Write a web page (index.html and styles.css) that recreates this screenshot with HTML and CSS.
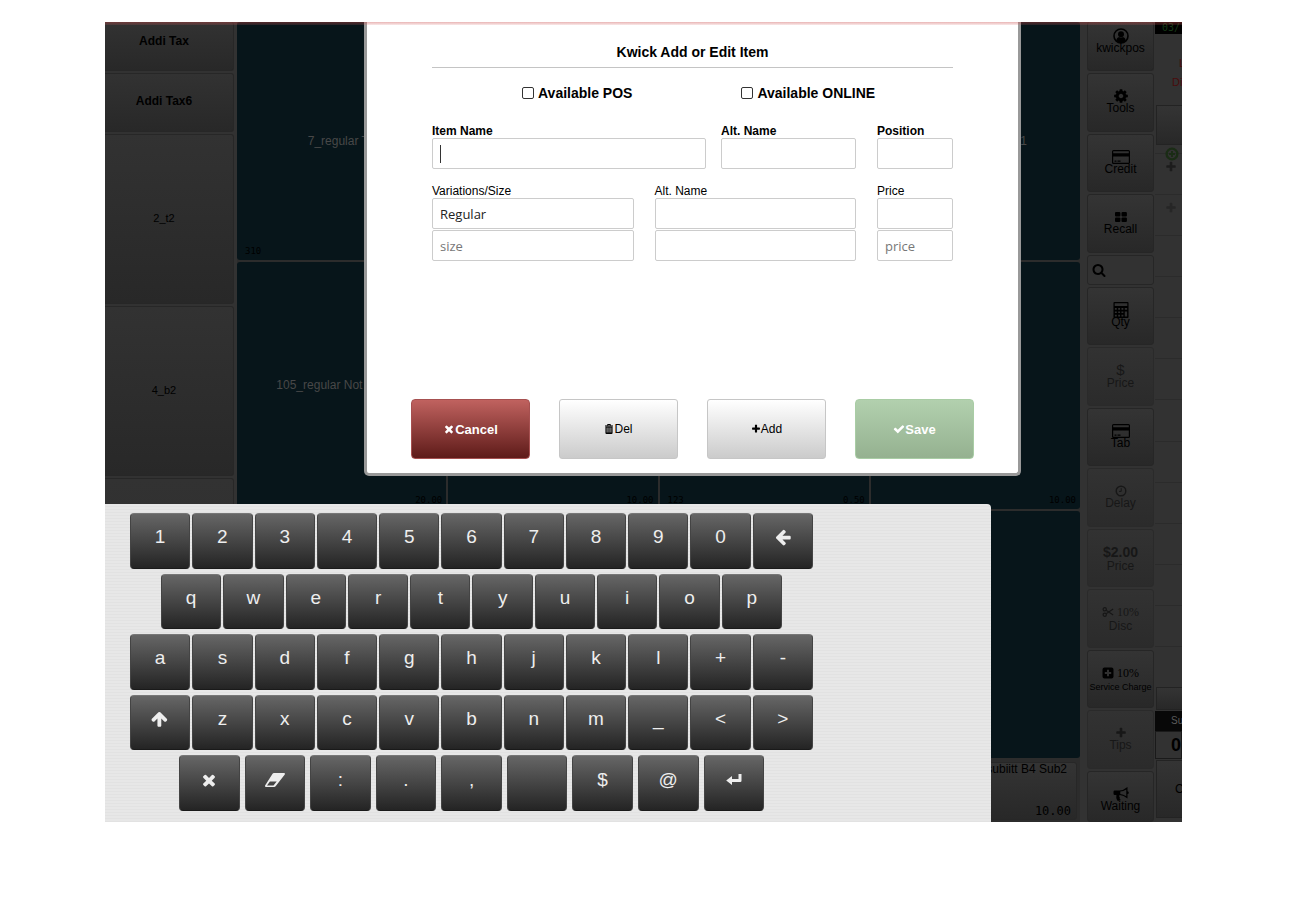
FILE: index.html
```html
<!DOCTYPE html>
<html lang="en">
<head>
    <meta charset="UTF-8">
    <meta name="viewport" content="width=device-width, initial-scale=1.0">
    <title>Kwick Add or Edit Item</title>
    <link rel="stylesheet" href="styles.css">
</head>
<body>
    <svg class="icon-defs" aria-hidden="true">
        <symbol id="i-times" viewBox="0 0 1792 1792"><path d="M1490 1322q0 40-28 68l-136 136q-28 28-68 28t-68-28l-294-294-294 294q-28 28-68 28t-68-28l-136-136q-28-28-28-68t28-68l294-294-294-294q-28-28-28-68t28-68l136-136q28-28 68-28t68 28l294 294 294-294q28-28 68-28t68 28l136 136q28 28 28 68t-28 68l-294 294 294 294q28 28 28 68z"/></symbol>
        <symbol id="i-plus" viewBox="0 0 1792 1792"><path d="M1600 736v192q0 40-28 68t-68 28h-416v416q0 40-28 68t-68 28h-192q-40 0-68-28t-28-68v-416h-416q-40 0-68-28t-28-68v-192q0-40 28-68t68-28h416v-416q0-40 28-68t68-28h192q40 0 68 28t28 68v416h416q40 0 68 28t28 68z"/></symbol>
        <symbol id="i-check" viewBox="0 0 1792 1792"><path d="M1671 566q0 40-28 68l-724 724-136 136q-28 28-68 28t-68-28l-136-136-362-362q-28-28-28-68t28-68l136-136q28-28 68-28t68 28l294 295 656-657q28-28 68-28t68 28l136 136q28 28 28 68z"/></symbol>
        <symbol id="i-search" viewBox="0 0 1792 1792"><path d="M1216 832q0-185-131.5-316.5t-316.5-131.5-316.5 131.5-131.5 316.5 131.5 316.5 316.5 131.5 316.5-131.5 131.5-316.5zm512 832q0 52-38 90t-90 38q-54 0-90-38l-343-342q-179 124-399 124-143 0-273.5-55.5t-225-150-150-225-55.5-273.5 55.5-273.5 150-225 225-150 273.5-55.5 273.5 55.5 225 150 150 225 55.5 273.5q0 220-124 399l343 343q37 37 37 90z"/></symbol>
        <symbol id="i-left" viewBox="0 0 1792 1792"><path d="M1664 896v128q0 53-32.5 90.5t-84.5 37.5h-704l293 294q38 36 38 90t-38 90l-75 76q-37 37-90 37-52 0-91-37l-651-652q-37-37-37-90 0-52 37-91l651-650q38-38 91-38 52 0 90 38l75 74q38 38 38 91t-38 91l-293 293h704q52 0 84.5 37.5t32.5 90.5z"/></symbol>
        <symbol id="i-up" viewBox="0 0 1792 1792"><path transform="rotate(90 896 896)" d="M1664 896v128q0 53-32.5 90.5t-84.5 37.5h-704l293 294q38 36 38 90t-38 90l-75 76q-37 37-90 37-52 0-91-37l-651-652q-37-37-37-90 0-52 37-91l651-650q38-38 91-38 52 0 90 38l75 74q38 38 38 91t-38 91l-293 293h704q52 0 84.5 37.5t32.5 90.5z"/></symbol>
        <symbol id="i-cog" viewBox="0 0 1792 1792"><path d="M1152 896q0-106-75-181t-181-75-181 75-75 181 75 181 181 75 181-75 75-181zm512-109v222q0 12-8 23t-20 13l-185 28q-19 54-39 91 35 50 107 138 10 12 10 25t-9 23q-27 37-99 108t-94 71q-12 0-26-9l-138-108q-44 23-91 38-16 136-29 186-7 28-36 28h-222q-14 0-24.5-8.5t-11.5-21.5l-28-184q-49-16-90-37l-141 107q-10 9-25 9-14 0-25-11-126-114-165-168-7-10-7-23 0-12 8-23 15-21 51-66.5t54-70.5q-27-50-41-99l-183-27q-13-2-21-12.5t-8-23.5v-222q0-12 8-23t19-13l186-28q14-46 39-92-40-57-107-138-10-12-10-24 0-10 9-23 26-36 98.5-107.5t94.5-71.5q13 0 26 10l138 107q44-23 91-38 16-136 29-186 7-28 36-28h222q14 0 24.5 8.5t11.5 21.5l28 184q49 16 90 37l142-107q9-9 24-9 13 0 25 10 129 119 165 170 7 8 7 22 0 12-8 23-15 21-51 66.5t-54 70.5q26 50 41 98l183 28q13 2 21 12.5t8 23.5z"/></symbol>
        <symbol id="i-user" viewBox="0 0 16 16"><circle cx="8" cy="8" r="7" fill="none" stroke="currentColor" stroke-width="1.6"/><circle cx="8" cy="6.3" r="3"/><path d="M3 12.6q1-3.400 3-3.600 2 1.200 4 0 2 .2 3 3.600-2 2.400-5 2.400t-5-2.400z"/></symbol>
        <symbol id="i-card" viewBox="0 0 18 14"><path fill-rule="evenodd" d="M1.500 0h15q1.500 0 1.500 1.500v11q0 1.500-1.500 1.500h-15q-1.500 0-1.500-1.500v-11q0-1.500 1.500-1.500zM1.200 1.200v2h15.600v-2zM1.200 6.500v6.200h15.600v-6.200zM2.500 10.500h2v1.200h-2zM5.500 10.500h3v1.200h-3z"/></symbol>
        <symbol id="i-large" viewBox="0 0 12 10"><rect width="5.400" height="4.500" rx="1"/><rect x="6.500" width="5.400" height="4.500" rx="1"/><rect y="5.400" width="5.400" height="4.500" rx="1"/><rect x="6.500" y="5.400" width="5.400" height="4.500" rx="1"/></symbol>
        <symbol id="i-calc" viewBox="0 0 16 17"><path fill-rule="evenodd" d="M1 0h14q1 0 1 1v15q0 1-1 1h-14q-1 0-1-1v-15q0-1 1-1zM1.300 1.300v3h13.400v-3zM1.500 6.500v1.800h2v-1.800zM5 6.500v1.800h2v-1.800zM8.500 6.500v1.800h2v-1.800zM12 6.500v1.800h2.500v-1.800zM1.500 10v1.800h2v-1.800zM5 10v1.800h2v-1.800zM8.500 10v1.800h2v-1.800zM12 10v5.500h2.500v-5.500zM1.500 13.500v1.800h2v-1.800zM5 13.500v1.800h2v-1.800zM8.500 13.500v1.800h2v-1.800z"/></symbol>
        <symbol id="i-clock" viewBox="0 0 12 12"><circle cx="6" cy="6" r="4.800" fill="none" stroke="currentColor" stroke-width="1.400"/><path d="M6.200 3.200v3.200h-2.200" fill="none" stroke="currentColor"/></symbol>
        <symbol id="i-cut" viewBox="0 0 14 12"><g fill="none" stroke="currentColor" stroke-width="1.400"><circle cx="3.200" cy="2.900" r="1.900"/><circle cx="3.200" cy="9.100" r="1.900"/><path d="M4.800 4l8.200 5.500M4.800 8l8.200-5.500"/></g></symbol>
        <symbol id="i-plusbox" viewBox="0 0 12 12"><path fill-rule="evenodd" d="M2.500.5h7q2 0 2 2v7q0 2-2 2h-7q-2 0-2-2v-7q0-2 2-2zM5 2.800v2.200h-2.200v2h2.200v2.200h2v-2.200h2.200v-2h-2.200v-2.200z"/></symbol>
        <symbol id="i-pluscircle" viewBox="0 0 12 12"><circle cx="6" cy="6" r="4.600" fill="none" stroke="currentColor" stroke-width="2"/><path d="M5.200 3.500h1.600v1.700h1.700v1.600h-1.700v1.700h-1.600v-1.700h-1.700v-1.600h1.700z"/></symbol>
        <symbol id="i-horn" viewBox="0 0 16 14"><path fill-rule="evenodd" d="M14.500 0v4.300q1.300.2 1.300 1.400t-1.300 1.400v4.400q-4-3.200-7.700-3.500-1.500 1 0 2.400-.7 1.200 1 2.600-1.400 1.400-3.600.4-1.400-2.800-.8-5.400h-1.600q-1.300 0-1.300-1.300v-2q0-1.300 1.300-1.300h4.700q4 0 8-3.400zM13.300 2.400q-3 2-6 2.200v2.300q3 .2 6 2.300z"/></symbol>
        <symbol id="i-trash" viewBox="0 0 12 14"><path d="M4 2.300v-1.600h4v1.600M.5 2.700h11" fill="none" stroke="currentColor" stroke-width="1.400"/><path fill-rule="evenodd" d="M1 3.500h10v9q0 1.500-1.500 1.500h-7q-1.500 0-1.500-1.500zM2.800 5v7h1v-7zM5.500 5v7h1v-7zM8.200 5v7h1v-7z"/></symbol>
        <symbol id="i-eraser" viewBox="0 0 20 14"><path fill-rule="evenodd" d="M9 0h10q1.400.2.800 1.500l-9 11.500q-.6 1-1.800 1h-8q-1.500-.2-.9-1.500l7.300-11.400q.6-1.100 1.600-1.100zM4.900 8.500l-2.900 4h6.500l3.200-4z"/></symbol>
        <symbol id="i-enter" viewBox="0 0 16 12"><path d="M12.500 0h3v6.800q0 1.200-1.200 1.200h-8.300v3l-5.800-4.500 5.800-4.500v3h6.500z"/></symbol>
    </svg>

    <main class="screen">
        <nav class="categories">
            <button class="category first">Addi Tax</button>
            <button class="category short">Addi Tax6</button>
            <button class="category">2_t2</button>
            <button class="category">4_b2</button>
            <button class="category rest" aria-label="More"></button>
        </nav>

        <section class="items">
            <button class="item"><span class="item-name">7_regular T1</span><span class="item-meta"><span>310</span></span></button>
            <button class="item" aria-label="Item"></button>
            <button class="item" aria-label="Item"></button>
            <button class="item"><span class="item-name">106_regular Tax T1</span></button>

            <button class="item"><span class="item-name">105_regular Not Taxable</span><span class="item-meta"><span></span><span>20.00</span></span></button>
            <button class="item"><span class="item-meta"><span></span><span>10.00</span></span></button>
            <button class="item"><span class="item-meta"><span>123</span><span>0.50</span></span></button>
            <button class="item"><span class="item-meta"><span></span><span>10.00</span></span></button>

            <button class="item" aria-label="Item"></button>
            <button class="item" aria-label="Item"></button>
            <button class="item" aria-label="Item"></button>
            <button class="item" aria-label="Item"></button>

            <button class="item plain" aria-label="Item"></button>
            <button class="item plain" aria-label="Item"></button>
            <button class="item plain" aria-label="Item"></button>
            <button class="item plain"><span class="plain-name">B4 subiitt B4 Sub2</span><span class="plain-price">10.00</span></button>
        </section>

        <aside class="tools">
            <button class="tool first"><svg class="ic16"><use href="#i-user"/></svg>kwickpos</button>
            <button class="tool"><svg class="ic16"><use href="#i-cog"/></svg>Tools</button>
            <button class="tool"><svg class="ic18"><use href="#i-card"/></svg>Credit</button>
            <button class="tool"><svg class="ic12"><use href="#i-large"/></svg>Recall</button>
            <button class="tool search" aria-label="Search"><svg class="ic14"><use href="#i-search"/></svg></button>
            <button class="tool"><svg class="ic18"><use href="#i-calc"/></svg>Qty</button>
            <button class="tool" disabled><span class="dollar">$</span>Price</button>
            <button class="tool"><svg class="ic18"><use href="#i-card"/></svg>Tab</button>
            <button class="tool" disabled><svg class="ic12"><use href="#i-clock"/></svg>Delay</button>
            <button class="tool" disabled><b class="amount">$2.00</b>Price</button>
            <button class="tool" disabled><span class="percent"><svg class="ic12"><use href="#i-cut"/></svg>10%</span>Disc</button>
            <button class="tool"><span class="percent"><svg class="ic12"><use href="#i-plusbox"/></svg>10%</span><small>Service Charge</small></button>
            <button class="tool" disabled><svg class="ic12"><use href="#i-plus"/></svg>Tips</button>
            <button class="tool last"><svg class="ic16"><use href="#i-horn"/></svg>Waiting</button>
        </aside>

        <aside class="ticket">
            <div class="ticket-date">03/</div>
            <div class="ticket-info"><span>L</span><span>Di</span></div>
            <button class="ticket-button top" aria-label="Order"></button>
            <div class="ticket-lines">
                <div class="line"><svg class="ic14 add"><use href="#i-pluscircle"/></svg><svg class="ic12"><use href="#i-plus"/></svg></div>
                <div class="line faint"><svg class="ic12"><use href="#i-plus"/></svg></div>
                <div class="line"></div>
                <div class="line"></div>
                <div class="line"></div>
                <div class="line"></div>
                <div class="line"></div>
                <div class="line"></div>
                <div class="line"></div>
                <div class="line"></div>
                <div class="line"></div>
                <div class="line"></div>
                <div class="line"></div>
            </div>
            <button class="ticket-button mid" aria-label="Totals"></button>
            <div class="subtotal-label">Su</div>
            <div class="subtotal">0</div>
            <button class="ticket-button cash">C</button>
        </aside>

        <form class="modal">
            <h1>Kwick Add or Edit Item</h1>
            <div class="checks">
                <label><input type="checkbox"> Available POS</label>
                <label><input type="checkbox"> Available ONLINE</label>
            </div>
            <div class="fields">
                <label class="field grow">Item Name<input class="focused" type="text"></label>
                <label class="field alt">Alt. Name<input type="text"></label>
                <label class="field small">Position<input type="text"></label>
            </div>
            <div class="fields variations">
                <div class="field grow">
                    <label for="size1">Variations/Size</label>
                    <input id="size1" type="text" value="Regular">
                    <input type="text" placeholder="size" aria-label="Size 2">
                </div>
                <div class="field grow">
                    <label for="alt1">Alt. Name</label>
                    <input id="alt1" type="text">
                    <input type="text" aria-label="Alt. Name 2">
                </div>
                <div class="field small">
                    <label for="price1">Price</label>
                    <input id="price1" type="text">
                    <input type="text" placeholder="price" aria-label="Price 2">
                </div>
            </div>
            <div class="actions">
                <button type="button" class="cancel"><svg class="ic12"><use href="#i-times"/></svg>Cancel</button>
                <button type="button"><svg class="ic10"><use href="#i-trash"/></svg>Del</button>
                <button type="button"><svg class="ic10"><use href="#i-plus"/></svg>Add</button>
                <button type="button" class="save"><svg class="ic12"><use href="#i-check"/></svg>Save</button>
            </div>
        </form>

        <section class="keyboard">
            <div class="keys">
                <button>1</button><button>2</button><button>3</button><button>4</button><button>5</button><button>6</button><button>7</button><button>8</button><button>9</button><button>0</button><button aria-label="Backspace"><svg class="ic18"><use href="#i-left"/></svg></button>
            </div>
            <div class="keys letters">
                <button>q</button><button>w</button><button>e</button><button>r</button><button>t</button><button>y</button><button>u</button><button>i</button><button>o</button><button>p</button>
            </div>
            <div class="keys">
                <button>a</button><button>s</button><button>d</button><button>f</button><button>g</button><button>h</button><button>j</button><button>k</button><button>l</button><button>+</button><button>-</button>
            </div>
            <div class="keys">
                <button aria-label="Shift"><svg class="ic18"><use href="#i-up"/></svg></button><button>z</button><button>x</button><button>c</button><button>v</button><button>b</button><button>n</button><button>m</button><button>_</button><button>&lt;</button><button>&gt;</button>
            </div>
            <div class="keys bottom">
                <button aria-label="Close"><svg class="ic18"><use href="#i-times"/></svg></button><button aria-label="Clear"><svg class="ic20"><use href="#i-eraser"/></svg></button><button>:</button><button>.</button><button>,</button><button aria-label="Space"></button><button>$</button><button>@</button><button aria-label="Enter"><svg class="ic16"><use href="#i-enter"/></svg></button>
            </div>
        </section>
    </main>
</body>
</html>
```
FILE: styles.css
```css
* {
    box-sizing: border-box;
}
body {
    margin: 0;
    padding: 22px 120px 0 105px;
    background-color: #FFFFFF;
    font-family: "Liberation Sans", Arial, sans-serif;
    font-size: 12px;
    color: #000000;
}
button, input {
    font-family: inherit;
    font-size: inherit;
    color: inherit;
    margin: 0;
}
button {
    padding: 0;
    cursor: pointer;
}
svg {
    fill: currentColor;
    flex: none;
}
.icon-defs {
    position: absolute;
    width: 0;
    height: 0;
}
.ic10 { width: 10px; height: 10px; }
.ic12 { width: 12px; height: 12px; }
.ic14 { width: 14px; height: 14px; }
.ic16 { width: 16px; height: 16px; }
.ic18 { width: 18px; height: 18px; }
.ic20 { width: 20px; height: 20px; }

.screen {
    position: relative;
    display: flex;
    overflow: hidden;
    background-color: #323232;
}
/* red shadow of the alert bar above the screen */
.screen::after {
    content: "";
    position: absolute;
    inset: 0 0 auto 0;
    height: 3px;
    background: linear-gradient(rgba(200, 70, 70, 0.4), rgba(220, 110, 110, 0.15));
}

/* categories */
.categories {
    width: 132px;
    padding-right: 3px;
    display: flex;
    flex-direction: column;
    gap: 2px;
    flex: none;
}
.category {
    height: 170px;
    border: 1px solid #272727;
    border-left: none;
    border-radius: 0 3px 3px 0;
    background: linear-gradient(#323232, #282828);
    font-size: 11px;
    padding: 0 10px 3px 0;
}
.category.first, .category.short {
    font-size: 12px;
    font-weight: bold;
}
.category.first {
    height: 49px;
    padding-bottom: 10px;
    border-top: none;
}
.category.short {
    height: 59px;
}
.category.rest {
    flex: 1;
}

/* items */
.items {
    flex: 1;
    display: grid;
    grid-template-columns: repeat(4, minmax(0, 1fr));
    grid-template-rows: 238px 247px 247px 62px;
    gap: 2px;
    background-color: #2C2C2C;
}
.item {
    position: relative;
    display: flex;
    align-items: center;
    justify-content: center;
    border: none;
    border-radius: 3px;
    background-color: #07151A;
    color: #484848;
    white-space: nowrap;
}
.item-name {
    padding-bottom: 1px;
}
.item-meta {
    position: absolute;
    inset: auto 4px 2px 8px;
    display: flex;
    justify-content: space-between;
    font: 9px/14px "DejaVu Sans Mono", monospace;
    color: #000000;
}
.item.plain {
    margin: 2px 3px 2px 0;
    padding: 0 5px;
    flex-direction: column;
    align-items: flex-end;
    justify-content: space-between;
    border: 1px solid #272727;
    background: linear-gradient(#343434, #282828);
    color: #000000;
}
.plain-name {
    padding-right: 4px;
    line-height: 12px;
}
.plain-price {
    font: 12px/16px "DejaVu Sans Mono", monospace;
}

/* tools */
.tools {
    width: 75px;
    padding: 0 1px 0 7px;
    display: flex;
    flex-direction: column;
    gap: 2px;
    flex: none;
}
.tool {
    flex: 1 1 0;
    min-height: 0;
    display: flex;
    flex-direction: column;
    align-items: center;
    justify-content: flex-start;
    padding-top: 14px;
    border: 1px solid #262626;
    border-radius: 3px;
    background: linear-gradient(#343434, #282828);
    line-height: 12px;
    white-space: nowrap;
}
.tool svg {
    height: 16px;
    margin-bottom: -2px;
}
.tool:disabled {
    color: #171717;
    border-color: #2A2A2A;
    background: linear-gradient(#323232, #2B2B2B);
}
.tool.first {
    flex: 0 0 49px;
    justify-content: flex-end;
    padding: 0 0 16px;
    border-top: none;
}
.tool.search {
    flex: 0 0 30px;
    align-items: flex-start;
    justify-content: center;
    padding: 0 0 0 4px;
    background: #323232;
}
.tool.search svg {
    margin: 0;
}
.tool.last {
    flex: 0 0 51px;
}
.tool small {
    font-size: 9px;
}
.dollar {
    font-size: 15px;
    line-height: 15px;
}
.amount {
    font-size: 14px;
    line-height: 16px;
}
.percent {
    display: flex;
    align-items: center;
    gap: 3px;
    font-family: "Liberation Serif", serif;
    line-height: 16px;
}
.tool .percent svg {
    height: 12px;
    margin: 0;
}

/* ticket */
.ticket {
    width: 27px;
    display: flex;
    flex-direction: column;
    flex: none;
    overflow: hidden;
    white-space: nowrap;
}
.ticket-date {
    height: 12px;
    padding-left: 7px;
    background-color: #000000;
    color: #173817;
    font: 10px/12px "DejaVu Sans Mono", monospace;
}
.ticket-info {
    height: 70px;
    padding: 20px 0 0 17px;
    display: flex;
    flex-direction: column;
    color: #4A0C0C;
    font-size: 11px;
    line-height: 19px;
}
.ticket-info span:first-child {
    padding-left: 7px;
}
.ticket-button {
    flex: none;
    border: 1px solid #232323;
    border-right: none;
    background: linear-gradient(#343434, #282828);
    text-align: left;
}
.ticket-button.top {
    height: 40px;
    margin: 1px 0 8px 1px;
}
.ticket-lines {
    flex: 1;
    display: flex;
    flex-direction: column;
}
.line {
    position: relative;
    flex: 1;
    padding: 7px 0 0 10px;
    border-top: 1px solid #2B2B2B;
    color: #1C1C1C;
}
.line.faint {
    color: #262626;
}
.line .add {
    position: absolute;
    top: -7px;
    left: 10px;
    color: #1A2C15;
}
.ticket-button.mid {
    height: 23px;
    margin: 0 0 1px 1px;
}
.subtotal-label {
    height: 20px;
    padding-left: 16px;
    background-color: #080808;
    color: #5A5A5A;
    font-size: 10px;
    line-height: 20px;
}
.subtotal {
    height: 28px;
    padding-left: 15px;
    border: 1px solid #1A1A1A;
    font-size: 18px;
    font-weight: bold;
    line-height: 26px;
}
.ticket-button.cash {
    height: 58px;
    margin: 1px 0 4px 1px;
    padding-left: 18px;
}

/* add / edit dialog */
.modal {
    position: absolute;
    top: 0;
    left: 259px;
    width: 657px;
    padding: 21px 65px 14px;
    border: 3px solid #999999;
    border-top: none;
    border-radius: 0 0 5px 5px;
    background-color: #FFFFFF;
}
.modal h1 {
    margin: 0 0 16px;
    padding-bottom: 6px;
    border-bottom: 1px solid #C4C4C4;
    font-size: 14px;
    line-height: 18px;
    text-align: center;
}
.checks {
    display: flex;
    gap: 109px;
    padding-left: 90px;
    font-size: 14px;
    font-weight: bold;
    line-height: 18px;
}
.checks label {
    display: flex;
    align-items: center;
    gap: 4px;
}
.checks input {
    appearance: none;
    width: 12px;
    height: 12px;
    border: 1px solid #333333;
    border-radius: 2px;
    background-color: #FFFFFF;
}
.fields {
    display: flex;
    margin-top: 22px;
    font-weight: bold;
    line-height: 14px;
}
.field {
    display: flex;
    flex-direction: column;
    min-width: 0;
}
.field.grow {
    flex: 1;
    margin-right: 15px;
}
.field.alt {
    width: 135px;
    margin-right: 21px;
}
.field.small {
    width: 76px;
}
.field input {
    width: 100%;
    height: 31px;
    padding: 0 7px;
    border: 1px solid #CCCCCC;
    border-radius: 2px;
    background-color: #FFFFFF;
    font: 13px "Open Sans", sans-serif;
    color: #222222;
}
.field input::placeholder {
    color: #777777;
    opacity: 1;
}
/* text cursor */
.field input.focused {
    background: linear-gradient(#333333, #333333) 7px center / 1px 18px no-repeat #FFFFFF;
    outline: none;
}
.variations {
    margin-top: 15px;
    font-weight: normal;
}
.variations .field.grow {
    margin-right: 21px;
}
.variations input + input {
    margin-top: 1px;
}
.actions {
    display: flex;
    gap: 29px;
    margin: 138px -21px 0;
}
.actions button {
    flex: 1;
    height: 60px;
    display: flex;
    align-items: center;
    justify-content: center;
    border: 1px solid #C6C6C6;
    border-radius: 3px;
    background: linear-gradient(#FFFFFF, #CBCBCB);
}
.actions .cancel {
    border-color: #A65050;
    border-radius: 4px;
    background: linear-gradient(#C0625F, #5E1B19);
    color: #FFFFFF;
    font-size: 13px;
    font-weight: bold;
}
.actions .save {
    border-color: #A9CDA5;
    border-radius: 4px;
    background: linear-gradient(#B2D0AE, #95B190);
    color: #FFFFFF;
    font-size: 13px;
    font-weight: bold;
}

/* on-screen keyboard */
.keyboard {
    position: absolute;
    left: 0;
    bottom: 0;
    width: 886px;
    height: 318px;
    padding: 9px 0 11px 25px;
    display: grid;
    grid-auto-rows: 1fr;
    gap: 5px;
    border-radius: 0 4px 0 0;
    background: repeating-linear-gradient(#E7E7E7 0, #E7E7E7 2px, #E2E2E2 2px, #E2E2E2 3px);
}
.keys {
    width: 683px;
    display: flex;
    gap: 2px;
}
.keys.letters {
    width: 621px;
    margin-left: 31px;
}
.keys.bottom {
    width: 585px;
    margin-left: 49px;
    gap: 5px;
}
.keys button {
    flex: 1 1 0;
    display: flex;
    align-items: center;
    justify-content: center;
    padding-bottom: 7px;
    border: 1px solid #444444;
    border-color: #777777 #444444 #1A1A1A;
    border-radius: 4px;
    background: linear-gradient(#666666, #242424);
    color: #EEEEEE;
    font-size: 19px;
}
```
